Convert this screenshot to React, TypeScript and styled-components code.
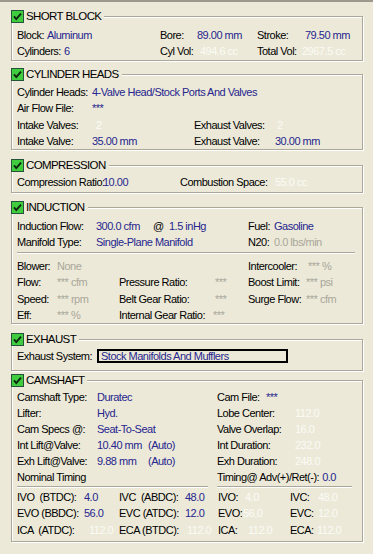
import React from 'react';
import styled, { createGlobalStyle } from 'styled-components';

const Global = createGlobalStyle`
  html, body { margin: 0; padding: 0; background: #ECE9D8; }
  body {
    font-family: "Liberation Sans", Arial, sans-serif;
    font-size: 11px;
    letter-spacing: -0.5px;
    color: #000;
  }
`;

type Tone = 'blue' | 'white' | 'grey' | 'black';
const toneColor: Record<Tone, string> = {
  blue: '#26268F',
  white: '#FBFBF6',
  grey: '#A9A79A',
  black: '#000000',
};

const Window = styled.div`
  width: 373px;
  height: 554px;
  box-sizing: border-box;
  border-top: 2px solid #9C998C;
  padding: 0 10px 0 11px;
  overflow: hidden;
`;

const Group = styled.fieldset<{ $mt: number; $pt: number; $pb: number }>`
  margin: ${(p) => p.$mt}px 0 0 0;
  padding: ${(p) => p.$pt}px 4px ${(p) => p.$pb}px 5px;
  border: 1px solid #ACA899;
  box-shadow: inset 1px 1px 0 #fff, 1px 1px 0 #fff;
  min-width: 0;
`;

const Legend = styled.legend`
  display: flex;
  align-items: center;
  gap: 2px;
  height: 13px;
  padding: 0 3px 0 0;
  margin-left: -6px;
  background: #ECE9D8;
  font-size: 11.5px;
  letter-spacing: -0.6px;
  line-height: 13px;
`;

const Row = styled.div<{ $h?: number }>`
  display: flex;
  align-items: center;
  height: ${(p) => p.$h ?? 16}px;
  line-height: 14px;
  white-space: pre;
`;

const Cell = styled.div<{ $w?: number }>`
  display: flex;
  align-items: center;
  flex: none;
  width: ${(p) => (p.$w ? `${p.$w}px` : 'auto')};
`;

const Label = styled.span<{ $w?: number }>`
  display: inline-block;
  flex: none;
  ${(p) => (p.$w ? `width: ${p.$w}px;` : 'margin-right: 3px;')}
`;

const Val = styled.span<{ $t: Tone }>`
  color: ${(p) => toneColor[p.$t]};
`;

const Divider = styled.div<{ $w: number; $mt: number; $mb: number; $ml?: number }>`
  width: ${(p) => p.$w}px;
  height: 1px;
  margin: ${(p) => p.$mt}px 0 ${(p) => p.$mb}px ${(p) => p.$ml ?? 0}px;
  background: #ACA899;
  border-bottom: 1px solid #fff;
`;

const DividerRow = styled.div`
  display: flex;
`;

const SelectBox = styled.div`
  width: 191px;
  height: 14px;
  box-sizing: border-box;
  border: 2px solid #000;
  padding-left: 2px;
  display: flex;
  align-items: center;
  line-height: 12px;
  color: #26268F;
`;

const Check = () => (
  <svg width="13" height="13" viewBox="0 0 13 13">
    <rect x="0.5" y="0.5" width="12" height="12" fill="#3FCD3F" stroke="#24533A" />
    <path d="M3 6.3 L5.3 9 L10 3.6" stroke="#0C240C" strokeWidth="1.9" fill="none" />
  </svg>
);

const Title = ({ children }: { children: React.ReactNode }) => (
  <Legend>
    <Check />
    <span>{children}</span>
  </Legend>
);

type FieldProps = {
  w?: number;
  lw?: number;
  label: string;
  value?: string;
  tone?: Tone;
};

const Field = ({ w, lw, label, value, tone = 'blue' }: FieldProps) => (
  <Cell $w={w}>
    <Label $w={lw}>{label}</Label>
    {value !== undefined && <Val $t={tone}>{value}</Val>}
  </Cell>
);

export default function App() {
  return (
    <>
      <Global />
      <Window>
        <Group $mt={8} $pt={4} $pb={2}>
          <Title>SHORT BLOCK</Title>
          <Row>
            <Field w={143} label="Block:" value="Aluminum" />
            <Field w={97} lw={37} label="Bore:" value="89.00 mm" />
            <Field lw={48} label="Stroke:" value="79.50 mm" />
          </Row>
          <Row $h={15}>
            <Field w={143} label="Cylinders:" value="6" />
            <Field w={97} lw={40} label="Cyl Vol:" value="494.6 cc" tone="white" />
            <Field lw={45} label="Total Vol:" value="2967.5 cc" tone="white" />
          </Row>
        </Group>

        <Group $mt={7} $pt={3} $pb={0}>
          <Title>CYLINDER HEADS</Title>
          <Row>
            <Field lw={75} label="Cylinder Heads:" value="4-Valve Head/Stock Ports And Valves" />
          </Row>
          <Row>
            <Field lw={75} label="Air Flow File:" value="***" />
          </Row>
          <Row $h={17}>
            <Field w={177} lw={79} label="Intake Valves:" value="2" tone="white" />
            <Field lw={83} label="Exhaust Valves:" value="2" tone="white" />
          </Row>
          <Row>
            <Field w={177} lw={75} label="Intake Valve:" value="35.00 mm" />
            <Field lw={81} label="Exhaust Valve:" value="30.00 mm" />
          </Row>
        </Group>

        <Group $mt={9} $pt={2} $pb={2}>
          <Title>COMPRESSION</Title>
          <Row>
            <Field w={163} lw={86} label="Compression Ratio:" value="10.00" />
            <Field lw={95} label="Combustion Space:" value="55.0 cc" tone="white" />
          </Row>
        </Group>

        <Group $mt={8} $pt={3} $pb={0}>
          <Title>INDUCTION</Title>
          <Row $h={17}>
            <Field w={136} lw={79} label="Induction Flow:" value="300.0 cfm" />
            <Field w={16} label="@" />
            <Cell $w={79}>
              <Val $t="blue">1.5 inHg</Val>
            </Cell>
            <Field lw={26} label="Fuel:" value="Gasoline" />
          </Row>
          <Row>
            <Field w={231} lw={79} label="Manifold Type:" value="Single-Plane Manifold" />
            <Field lw={26} label="N20:" value="0.0 lbs/min" tone="grey" />
          </Row>
          <Divider $w={338} $mt={2} $mb={4} />
          <Row>
            <Field w={231} lw={40} label="Blower:" value="None" tone="grey" />
            <Field lw={60} label="Intercooler:" value="*** %" tone="grey" />
          </Row>
          <Row>
            <Field w={102} lw={40} label="Flow:" value="*** cfm" tone="grey" />
            <Field w={129} lw={96} label="Pressure Ratio:" value="***" tone="grey" />
            <Field lw={58} label="Boost Limit:" value="*** psi" tone="grey" />
          </Row>
          <Row $h={17}>
            <Field w={102} lw={40} label="Speed:" value="*** rpm" tone="grey" />
            <Field w={129} lw={96} label="Belt Gear Ratio:" value="***" tone="grey" />
            <Field lw={58} label="Surge Flow:" value="*** cfm" tone="grey" />
          </Row>
          <Row>
            <Field w={102} lw={40} label="Eff:" value="*** %" tone="grey" />
            <Field w={129} lw={94} label="Internal Gear Ratio:" value="***" tone="grey" />
          </Row>
        </Group>

        <Group $mt={9} $pt={2} $pb={6}>
          <Title>EXHAUST</Title>
          <Row>
            <Cell>
              <Label $w={80}>Exhaust System:</Label>
              <SelectBox>Stock Manifolds And Mufflers</SelectBox>
            </Cell>
          </Row>
        </Group>

        <Group $mt={3} $pt={2} $pb={3}>
          <Title>CAMSHAFT</Title>
          <Row>
            <Field w={200} lw={80} label="Camshaft Type:" value="Duratec" />
            <Field lw={49} label="Cam File:" value="***" />
          </Row>
          <Row>
            <Field w={200} lw={80} label="Lifter:" value="Hyd." />
            <Field lw={78} label="Lobe Center:" value="112.0" tone="white" />
          </Row>
          <Row>
            <Field w={200} lw={80} label="Cam Specs @:" value="Seat-To-Seat" />
            <Field lw={78} label="Valve Overlap:" value="16.0" tone="white" />
          </Row>
          <Row>
            <Cell $w={200}>
              <Label $w={80}>Int Lift@Valve:</Label>
              <Cell $w={51}>
                <Val $t="blue">10.40 mm</Val>
              </Cell>
              <Val $t="blue">(Auto)</Val>
            </Cell>
            <Field lw={78} label="Int Duration:" value="232.0" tone="white" />
          </Row>
          <Row>
            <Cell $w={200}>
              <Label $w={80}>Exh Lift@Valve:</Label>
              <Cell $w={51}>
                <Val $t="blue">9.88 mm</Val>
              </Cell>
              <Val $t="blue">(Auto)</Val>
            </Cell>
            <Field lw={78} label="Exh Duration:" value="248.0" tone="white" />
          </Row>
          <Row>
            <Field w={200} label="Nominal Timing" />
            <Field label="Timing@ Adv(+)/Ret(-):" value="0.0" />
          </Row>
          <DividerRow>
            <Divider $w={191} $mt={1} $mb={1} />
            <Divider $w={135} $mt={1} $mb={1} $ml={9} />
          </DividerRow>
          <Row>
            <Field w={102} lw={67} label="IVO  (BTDC):" value="4.0" />
            <Field w={99} lw={66} label="IVC  (ABDC):" value="48.0" />
            <Field w={72} lw={27} label="IVO:" value="4.0" tone="white" />
            <Field lw={28} label="IVC:" value="48.0" tone="white" />
          </Row>
          <Row>
            <Field w={102} lw={67} label="EVO (BBDC):" value="56.0" />
            <Field w={99} lw={66} label="EVC (ATDC):" value="12.0" />
            <Field w={72} lw={25} label="EVO:" value="56.0" tone="white" />
            <Field lw={28} label="EVC:" value="12.0" tone="white" />
          </Row>
          <Row $h={17}>
            <Field w={102} lw={72} label="ICA  (ATDC):" value="112.0" tone="white" />
            <Field w={99} lw={68} label="ECA (BTDC):" value="112.0" tone="white" />
            <Field w={72} lw={30} label="ICA:" value="112.0" tone="white" />
            <Field lw={27} label="ECA:" value="112.0" tone="white" />
          </Row>
        </Group>
      </Window>
    </>
  );
}
